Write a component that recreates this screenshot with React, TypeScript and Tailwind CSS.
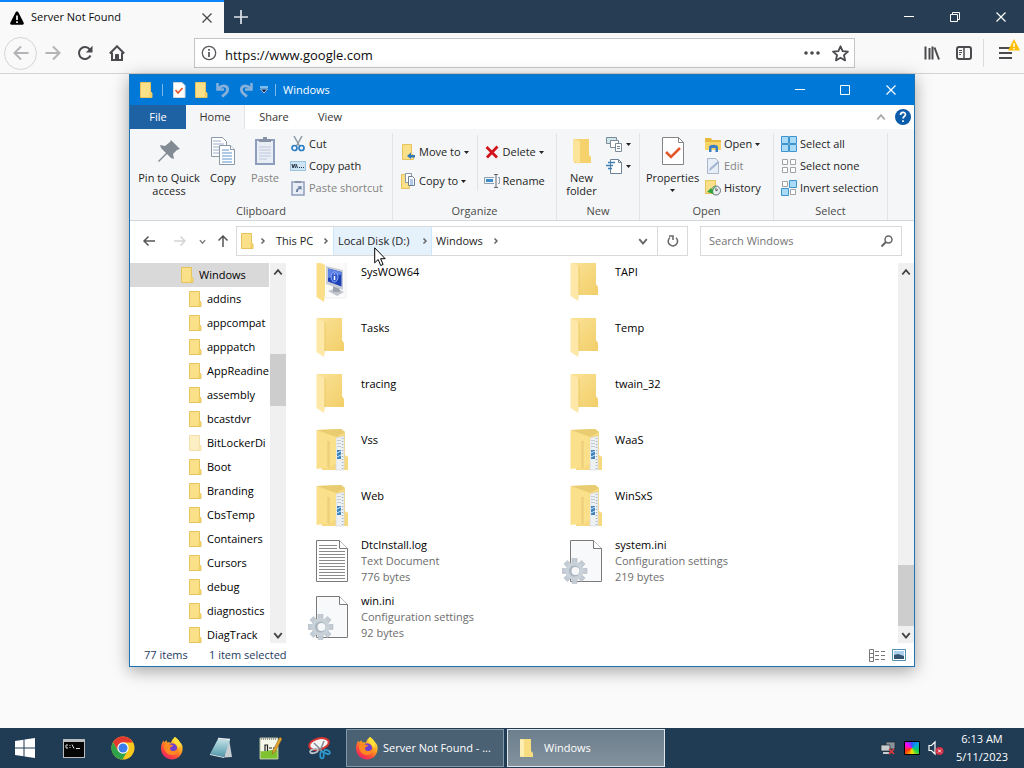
import type { ReactNode } from "react";

const NAV_FOLDERS = [
  "addins",
  "appcompat",
  "apppatch",
  "AppReadine",
  "assembly",
  "bcastdvr",
  "BitLockerDi",
  "Boot",
  "Branding",
  "CbsTemp",
  "Containers",
  "Cursors",
  "debug",
  "diagnostics",
  "DiagTrack",
];

type FileItem = {
  name: string;
  kind: "sys" | "folder" | "full" | "text" | "ini";
  type?: string;
  size?: string;
};

const FILES: FileItem[] = [
  { name: "SysWOW64", kind: "sys" },
  { name: "TAPI", kind: "folder" },
  { name: "Tasks", kind: "folder" },
  { name: "Temp", kind: "folder" },
  { name: "tracing", kind: "folder" },
  { name: "twain_32", kind: "folder" },
  { name: "Vss", kind: "full" },
  { name: "WaaS", kind: "full" },
  { name: "Web", kind: "full" },
  { name: "WinSxS", kind: "full" },
  { name: "DtcInstall.log", kind: "text", type: "Text Document", size: "776 bytes" },
  { name: "system.ini", kind: "ini", type: "Configuration settings", size: "219 bytes" },
  { name: "win.ini", kind: "ini", type: "Configuration settings", size: "92 bytes" },
];

/* ---------- icons ---------- */

function SmallFolder({ faded = false }: { faded?: boolean }) {
  return (
    <svg width="16" height="16" viewBox="0 0 16 16" className={faded ? "shrink-0 opacity-50" : "shrink-0"}>
      <path d="M2.500.500h10v9.500l1.500 1v4.500H2.500z" fill="#fbe08a" stroke="#e6c35c" />
      <path d="M11.500 15V10.500l2-.5v5z" fill="#f3cf63" />
    </svg>
  );
}

function Caret() {
  return (
    <svg width="5" height="3" viewBox="0 0 5 3" className="shrink-0">
      <path d="M0 0h5L2.500 3z" fill="#222" />
    </svg>
  );
}

function Chevron({ dir, color = "#666", size = 8 }: { dir: "up" | "down" | "right"; color?: string; size?: number }) {
  const d = { up: "M1 6l3-3.500L7 6", down: "M1 2.500L4 6l3-3.500", right: "M2.500 1.500L5 4 2.500 6.500" }[dir];
  return (
    <svg width={size} height={size} viewBox="0 0 8 8" className="shrink-0">
      <path d={d} fill="none" stroke={color} strokeWidth="1.500" />
    </svg>
  );
}

function FirefoxLogo() {
  return (
    <svg width="24" height="24" viewBox="0 0 24 24" className="shrink-0">
      <defs>
        <linearGradient id="ffBody" x1=".85" y1=".1" x2=".25" y2="1">
          <stop offset="0" stopColor="#fff04a" />
          <stop offset=".4" stopColor="#ff9a1f" />
          <stop offset=".7" stopColor="#ff4a3a" />
          <stop offset="1" stopColor="#e6206a" />
        </linearGradient>
      </defs>
      <path
        d="M15 1c3 2 4 3.500 4.500 5 .8.4 1.600 1 2 2 .6 1 .8 1.500 1 3C23.500 18 18 23.500 12 23.500S.8 18.500 1 12c0-3 1-5.500 2.500-7.500l.5 2L6.500 4l.5 2.500c1.500-.4 3-.3 4 .3C11.500 4.500 13 2.500 15 1z"
        fill="url(#ffBody)"
      />
      <circle cx="12" cy="12.500" r="5.200" fill="#6f3fd0" />
      <path d="M4 10c1.500-2 4-2.500 6-1.500l3 .8c-.3 1.700-2.500 1.700-3 2.700-.2 2 1.500 3.500 4 3 2-.5 3.500-2 3.500-4.500 2 4-1 8.500-5.500 8.500S4 15.500 4 10z" fill="#ff8a22" />
      <path d="M15 1c-2.500 3-1 6 1.500 7.500 1.500 1.500 1.500 3 1 4.500 3-3 3-6 2-7.500C18.500 4 17 2.500 15 1z" fill="#ffdf3a" />
    </svg>
  );
}

function FolderBig() {
  return (
    <svg width="48" height="48" viewBox="0 0 48 48">
      <defs>
        <linearGradient id="folderBack" x1="0" y1="0" x2="1" y2="1">
          <stop offset="0" stopColor="#fbe298" />
          <stop offset="1" stopColor="#f1ce68" />
        </linearGradient>
      </defs>
      <path d="M9 5h25v22l2 3v8H16z" fill="url(#folderBack)" />
      <path d="M8.500 5L17 9v29l-1 6-7.500-5z" fill="#fde8a8" />
      <path d="M17 9v29" stroke="#edc862" />
    </svg>
  );
}

function FolderFull() {
  return (
    <svg width="48" height="48" viewBox="0 0 48 48">
      <path d="M9 5l24-1 4 3v23l3 2v13H14z" fill="#f6d97e" />
      <path d="M28 13l8-2v34h-8z" fill="#eef1f4" stroke="#d5d9dd" strokeWidth=".7" />
      <path d="M34.500 13v31" stroke="#a9b3bd" strokeWidth="1.500" strokeDasharray="1 2" />
      <path d="M29 15.500h4M29 18.500h4M29 21.500h4" stroke="#c3cbd3" />
      <path d="M29 25h4v9h-4z" fill="#3f83bd" />
      <path d="M29 28l4-2M29 32l4-2" stroke="#cfe8f7" />
      <path d="M9 5l24-1 4 3-9 5z" fill="#e9cb70" />
      <path d="M8.500 5L28 12v26l-8 6-3-1-8.500 1z" fill="#fbe08c" />
      <path d="M20.500 16v27" stroke="#efd07a" strokeWidth="2.500" />
    </svg>
  );
}

function FolderSys() {
  return (
    <svg width="48" height="48" viewBox="0 0 48 48">
      <path d="M9 4h29v37H17z" fill="#fbfbfb" stroke="#efefef" />
      <path d="M8.500 4L17 8v28l-1 9-7.500-5z" fill="#fbdf88" />
      <path d="M9 4h26v1H12z" fill="#f5d672" />
      <path d="M20 34l8-3 8 4-7 4z" fill="#c2c6cc" />
      <path d="M25 28h6l1 7h-7z" fill="#9ba2ab" />
      <path d="M18 9l17 4v20l-17-6z" fill="#c8cdd6" />
      <path d="M20 11.500l13.500 3.500v14.500l-13.500-5z" fill="#1d3fb5" />
      <path d="M20 11.500l13.500 3.500v2.500L20 21z" fill="#5c82e6" />
      <ellipse cx="26.500" cy="20" rx="3.500" ry="5" fill="#3158cf" stroke="#a8c2ff" strokeWidth=".8" />
      <path d="M26.500 19v4M26.500 16.500v1" stroke="#fff" strokeWidth="1.500" />
    </svg>
  );
}

const GEAR_TEETH = [0, 45, 90, 135, 180, 225, 270, 315];

function PageIcon({ gear }: { gear: boolean }) {
  return (
    <svg width="48" height="48" viewBox="0 0 48 48">
      <path d="M8.500 3.500h23l8 8v33h-31z" fill={gear ? "#f8f9fa" : "#fff"} stroke="#7a7a7a" />
      <path d="M31.500 3.500v8h8" fill="#fff" stroke="#7a7a7a" />
      {gear ? (
        <g>
          {GEAR_TEETH.map((a) => (
            <rect key={a} x="10" y="21.500" width="5" height="7" fill="#c3ccd4" stroke="#aab4bd" strokeWidth=".5" transform={`rotate(${a} 12.500 34)`} />
          ))}
          <circle cx="12.500" cy="34" r="9" fill="#cad2d9" />
          <circle cx="12.500" cy="34" r="5.500" fill="#a9b5bf" />
          <circle cx="13.500" cy="34" r="4" fill="#f5f7f8" />
        </g>
      ) : (
        <path
          d="M11 8.500h18M11 11.500h18M11 14.500h26M11 17.500h26M11 20.500h26M11 23.500h26M11 26.500h26M11 29.500h26M11 32.500h26M11 35.500h26M11 38.500h26M11 41.500h26"
          stroke="#8b8b8b"
        />
      )}
    </svg>
  );
}

function FileIcon({ kind }: { kind: FileItem["kind"] }) {
  if (kind === "sys") return <FolderSys />;
  if (kind === "folder") return <FolderBig />;
  if (kind === "full") return <FolderFull />;
  return <PageIcon gear={kind === "ini"} />;
}

function MinimizeIcon() {
  return (
    <svg width="12" height="12" viewBox="0 0 12 12">
      <path d="M1 5.500h10" stroke="#fff" />
    </svg>
  );
}

function CloseIcon({ color = "#fff" }: { color?: string }) {
  return (
    <svg width="12" height="12" viewBox="0 0 12 12">
      <path d="M1.500 1.500l9 9M10.500 1.500l-9 9" stroke={color} strokeWidth="1.200" />
    </svg>
  );
}

/* ---------- browser ---------- */

function Browser() {
  return (
    <header className="shrink-0">
      <div className="flex h-[33px] bg-[#273d53] text-white">
        <div className="flex w-56 items-center gap-[6px] border-t-2 border-[#0a84ff] bg-[#f9f9fa] pr-[9px] pl-[9px] text-[#0c0c0d]">
          <svg width="16" height="16" viewBox="0 0 16 16">
            <path d="M8 1.500c.8 0 1.200.4 1.600 1.200l5 9.800c.6 1.200 0 2.200-1.200 2.200H2.600c-1.200 0-1.800-1-1.200-2.200l5-9.800C6.800 1.900 7.200 1.500 8 1.500z" fill="#000" />
            <path d="M8 5.500v4.500M8 11.300v1.700" stroke="#fff" strokeWidth="1.700" />
          </svg>
          <span className="flex-1 text-[11px]">Server Not Found</span>
          <button type="button" aria-label="Close tab" className="flex size-4 items-center justify-center">
            <CloseIcon color="#444" />
          </button>
        </div>
        <button type="button" aria-label="New tab" className="flex w-[34px] items-center justify-center">
          <svg width="14" height="14" viewBox="0 0 14 14">
            <path d="M7 0v14M0 7h14" stroke="#dfe5eb" strokeWidth="1.700" />
          </svg>
        </button>
        <div className="flex-1" />
        <button type="button" aria-label="Minimize" className="flex w-[46px] items-center justify-center">
          <MinimizeIcon />
        </button>
        <button type="button" aria-label="Restore" className="flex w-[46px] items-center justify-center">
          <svg width="12" height="12" viewBox="0 0 12 12" fill="none" stroke="#fff">
            <path d="M1.500 3.500h7v7h-7zM3.500 3V1.500h7v7H9" />
          </svg>
        </button>
        <button type="button" aria-label="Close" className="flex w-[46px] items-center justify-center">
          <CloseIcon />
        </button>
      </div>

      <div className="flex h-[41px] items-center border-b border-[#d5d5d7] bg-[#f9f9fa] pl-1 text-[#4a4a4f]">
        <button type="button" aria-label="Back" className="flex size-[33px] items-center justify-center rounded-full border border-[#d4d4d6]">
          <svg width="16" height="16" viewBox="0 0 16 16" fill="none" stroke="#b4b4b6" strokeWidth="2">
            <path d="M15.500 8H1.500M8 1.500L1.500 8 8 14.500" />
          </svg>
        </button>
        <button type="button" aria-label="Forward" className="flex size-8 items-center justify-center">
          <svg width="16" height="16" viewBox="0 0 16 16" fill="none" stroke="#b4b4b6" strokeWidth="2">
            <path d="M.5 8h14M8 1.500L14.500 8 8 14.500" />
          </svg>
        </button>
        <button type="button" aria-label="Reload" className="flex size-8 items-center justify-center">
          <svg width="16" height="16" viewBox="0 0 16 16" fill="none" stroke="currentColor" strokeWidth="2">
            <path d="M13.500 10.500a6 6 0 1 1-.8-6.200" />
            <path d="M15.500.800v6.700H8.800z" fill="currentColor" stroke="none" />
          </svg>
        </button>
        <button type="button" aria-label="Home" className="flex size-8 items-center justify-center">
          <svg width="16" height="16" viewBox="0 0 16 16" fill="none" stroke="currentColor" strokeWidth="2">
            <path d="M.8 8.500L8 1.300l7.200 7.200" />
            <path d="M3 7.500V15h10V7.500" />
            <path d="M6.500 14V9.500h3V14z" fill="currentColor" strokeWidth="1" />
          </svg>
        </button>
        <div className="ml-[61px] flex h-[30px] flex-1 items-center border border-[#c5c5c7] bg-white pl-[6px]">
          <svg width="16" height="16" viewBox="0 0 16 16" fill="none" stroke="#5a5a5e">
            <circle cx="8" cy="8" r="6.700" strokeWidth="1.300" />
            <path d="M8 7v5M8 4v1.800" strokeWidth="1.800" />
          </svg>
          <input
            aria-label="Address"
            defaultValue="https://www.google.com"
            className="ml-2 h-full min-w-0 flex-1 pt-[3px] text-[13px] text-[#0c0c0d] outline-none"
          />
          <button type="button" aria-label="Page actions" className="flex w-7 justify-center">
            <svg width="16" height="4" viewBox="0 0 16 4" fill="#4a4a4f">
              <circle cx="2" cy="2" r="1.800" />
              <circle cx="8" cy="2" r="1.800" />
              <circle cx="14" cy="2" r="1.800" />
            </svg>
          </button>
          <button type="button" aria-label="Bookmark" className="flex w-7 justify-center">
            <svg width="17" height="17" viewBox="0 0 16 16" fill="none" stroke="#4a4a4f" strokeWidth="1.700" strokeLinejoin="round">
              <path d="M8 1.200l2 4.600 5 .5-3.700 3.300 1 4.900L8 12l-4.300 2.500 1-4.900L1 6.300l5-.5z" />
            </svg>
          </button>
        </div>
        <div className="ml-[61px] flex h-8 items-center">
          <button type="button" aria-label="Library" className="flex size-8 items-center justify-center">
            <svg width="16" height="16" viewBox="0 0 16 16" fill="none" stroke="currentColor" strokeWidth="2">
              <path d="M1.500 1.500v13M5.500 3v11.500M8.500 1.500v13M10.500 2.500l4.500 12" />
            </svg>
          </button>
          <button type="button" aria-label="Sidebars" className="flex size-8 items-center justify-center">
            <svg width="16" height="16" viewBox="0 0 16 16" fill="none" stroke="currentColor">
              <rect x="1" y="2" width="14" height="12" rx="2" strokeWidth="2" />
              <path d="M8 2v12" strokeWidth="1.500" />
              <path d="M3 5.500h3M3 7.500h3M3 9.500h2" />
            </svg>
          </button>
          <span className="mx-[3px] h-7 w-px bg-[#dcdcde]" />
          <button type="button" aria-label="Menu" className="relative flex h-8 w-[37px] items-center pl-3">
            <svg width="14" height="14" viewBox="0 0 14 14" stroke="currentColor" strokeWidth="2">
              <path d="M0 2h13M0 7h13M0 12h13" />
            </svg>
            <svg width="12" height="12" viewBox="0 0 12 12" className="absolute top-[2px] right-1">
              <path d="M6 0l6 11.500H0z" fill="#ffbf00" />
              <path d="M6 4v4M6 9v1.500" stroke="#fff" strokeWidth="1.400" />
            </svg>
          </button>
        </div>
      </div>
    </header>
  );
}

/* ---------- ribbon ---------- */

function Group({ label, className, children }: { label: string; className: string; children: ReactNode }) {
  return (
    <section aria-label={label} className={`flex shrink-0 flex-col border-r border-[#e2e3e4] pb-px ${className}`}>
      <div className="flex flex-1 items-start">{children}</div>
      <div className="text-center leading-4 text-[#4a4a4a]">{label}</div>
    </section>
  );
}

function BigButton({ icon, className, children }: { icon: ReactNode; className: string; children: ReactNode }) {
  return (
    <button type="button" className={`flex shrink-0 flex-col items-center leading-[13px] ${className}`}>
      <span className="mb-[2px] flex h-9 items-center">{icon}</span>
      {children}
    </button>
  );
}

function SmallButton({ icon, label, caret, disabled }: { icon: ReactNode; label: string; caret?: boolean; disabled?: boolean }) {
  return (
    <button
      type="button"
      disabled={disabled}
      className="flex h-[22px] items-center gap-[3px] whitespace-nowrap disabled:text-[#838383]"
    >
      <span className="flex size-4 shrink-0 items-center justify-center">{icon}</span>
      {label}
      {caret && <Caret />}
    </button>
  );
}

function Ribbon() {
  return (
    <div className="flex h-[92px] overflow-hidden border-b border-[#d4d6d8] bg-[#f5f6f7] pt-1">
      <Group label="Clipboard" className="w-[263px]">
        <BigButton
          className="w-[78px]"
          icon={
            <svg width="24" height="24" viewBox="0 0 24 24">
              <path d="M14 1l9 9-3 1-4 4 1 5-3-1-4-4-8 8-1-1 8-8-5-5-1-3 5 1 5-4z" fill="#828b94" />
            </svg>
          }
        >
          Pin to Quick
          <br />
          access
        </BigButton>
        <BigButton
          className="w-[30px]"
          icon={
            <svg width="28" height="30" viewBox="0 0 28 30" fill="#fff" stroke="#8a97a5">
              <path d="M2.500 1.500h11l4 4v15h-15z" />
              <path d="M4 5h8M4 8h11M4 11h8M4 14h8M4 17h8" stroke="#9ab0c8" />
              <path d="M10.500 9.500h11l4 4v15h-15z" />
              <path d="M21.500 9.500v4h4" />
              <path d="M13 14h7M13 17h10M13 20h10M13 23h10M13 26h10" stroke="#5d94cd" />
            </svg>
          }
        >
          Copy
        </BigButton>
        <BigButton
          className="w-[54px] text-[#838383]"
          icon={
            <svg width="24" height="30" viewBox="0 0 24 30">
              <rect x="3" y="4" width="18" height="24" fill="#e9edf6" stroke="#8e9dbb" strokeWidth="2" />
              <path d="M6 6V3h4V1h4v2h4v3z" fill="#8792a6" />
              <path d="M6 11h12M6 14h12M6 17h12M6 20h12M6 23h8" stroke="#bcc6da" />
            </svg>
          }
        >
          Paste
        </BigButton>
        <div className="-ml-[2px] flex flex-col">
          <SmallButton
            label="Cut"
            icon={
              <svg width="16" height="16" viewBox="0 0 16 16" fill="none">
                <path d="M4 0l5.500 10M12 0L6.500 10" stroke="#8e9aa5" strokeWidth="1.500" />
                <circle cx="4.500" cy="12" r="2.500" stroke="#2b7fc6" strokeWidth="1.700" />
                <circle cx="11.500" cy="12" r="2.500" stroke="#2b7fc6" strokeWidth="1.700" />
              </svg>
            }
          />
          <SmallButton
            label="Copy path"
            icon={
              <svg width="16" height="10" viewBox="0 0 16 10">
                <rect x=".5" y=".5" width="15" height="9" fill="#cde4f5" stroke="#9cc3e0" />
                <path d="M2 3l1 4 1.500-4 1 4M6 3l1.500 4" stroke="#234" fill="none" />
                <path d="M9 6.500h1M11 6.500h1M13 6.500h1" stroke="#234" />
              </svg>
            }
          />
          <SmallButton
            label="Paste shortcut"
            disabled
            icon={
              <svg width="14" height="16" viewBox="0 0 14 16">
                <rect x="1" y="2" width="12" height="13" fill="#e9edf6" stroke="#8e9dbb" strokeWidth="1.500" />
                <path d="M4 3V1h6v2z" fill="#8792a6" />
                <path d="M5 12c0-3 1-4 3-4L6.500 6.500 10.500 6v4L9 9C7.500 9 7 10 7 12z" fill="#6c7f9f" />
              </svg>
            }
          />
        </div>
      </Group>

      <Group label="Organize" className="w-[164px]">
        <div className="mt-2 flex flex-col gap-[7px] pl-[7px]">
          <SmallButton
            label="Move to"
            caret
            icon={
              <svg width="16" height="16" viewBox="0 0 16 16">
                <path d="M2.500.500h9V10l2 1v4.500h-11z" fill="#fbe08a" stroke="#e6c35c" />
                <path d="M7 12l4-3.500V11h4v2.500h-4V15z" fill="#2f78bd" />
              </svg>
            }
          />
          <SmallButton
            label="Copy to"
            caret
            icon={
              <svg width="16" height="16" viewBox="0 0 16 16">
                <path d="M1.500 1.500h8v14h-8z" fill="#fbe08a" stroke="#e6c35c" />
                <path d="M5.500.500h6v9h-6z" fill="#fff" stroke="#8796a6" />
                <path d="M8.500 3.500h4l2 2v7h-6z" fill="#fff" stroke="#6b7f94" />
                <path d="M10 7h3M10 9h3M10 11h3" stroke="#5d94cd" />
              </svg>
            }
          />
        </div>
        <div className="mt-[2px] ml-2 h-14 w-px bg-[#e2e3e4]" />
        <div className="mt-2 flex flex-col gap-[7px] pl-[6px]">
          <SmallButton
            label="Delete"
            caret
            icon={
              <svg width="14" height="14" viewBox="0 0 14 14">
                <path d="M1.500 2L12 12.500M12.500 1.500L2 12.500" stroke="#d2151b" strokeWidth="2.800" />
              </svg>
            }
          />
          <SmallButton
            label="Rename"
            icon={
              <svg width="16" height="16" viewBox="0 0 16 16" fill="none">
                <path d="M10 4.500H.5v6H10M14 4.500h1.500v6H14" stroke="#8fa0b0" />
                <path d="M2 6h7v3H2z" fill="#3e8fd0" />
                <path d="M10 1.500h4M12 1.500v13M10 14.500h4" stroke="#5d6873" />
              </svg>
            }
          />
        </div>
      </Group>

      <Group label="New" className="w-[83px]">
        <BigButton
          className="w-[49px]"
          icon={
            <svg width="22" height="28" viewBox="0 0 22 28">
              <path d="M3 2h15v16l2 2v6H3z" fill="#f5d26c" />
              <path d="M2 2l7 2v21l-1 2-6-3z" fill="#fce49a" />
            </svg>
          }
        >
          New
          <br />
          folder
        </BigButton>
        <div className="flex flex-col">
          <button type="button" aria-label="New item" className="flex h-[22px] items-center gap-[3px]">
            <svg width="17" height="17" viewBox="0 0 17 17" fill="#fff" stroke="#7c8b99">
              <path d="M.5 1.500h10v6H.5z" fill="#cfe6ea" />
              <path d="M4.500 4.500h8v7h-8z" />
              <path d="M9.500 7.500h6v8h-6z" />
              <path d="M11 10.500h3M11 12.500h3" />
            </svg>
            <Caret />
          </button>
          <button type="button" aria-label="Easy access" className="flex h-[22px] items-center gap-[3px]">
            <svg width="17" height="17" viewBox="0 0 17 17" fill="#fff" stroke="#6e8296">
              <path d="M4.500 1.500h8l3 3v11h-11z" />
              <path d="M12.500 1.500v3h3" fill="none" />
              <path d="M2 4.500h7M0 7.500h7M2 10.500h4" stroke="#3b7fb8" strokeWidth="1.500" />
            </svg>
            <Caret />
          </button>
        </div>
      </Group>

      <Group label="Open" className="w-[134px]">
        <BigButton
          className="w-[65px]"
          icon={
            <svg width="22" height="28" viewBox="0 0 22 28">
              <path d="M.5.500h16l5 5v22H.5z" fill="#fff" stroke="#858585" />
              <path d="M16.500.500v5h5" fill="none" stroke="#858585" />
              <path d="M4 15l5 5 9-9" fill="none" stroke="#e2572b" strokeWidth="2.600" />
            </svg>
          }
        >
          Properties
          <span className="flex h-[13px] items-center">
            <Caret />
          </span>
        </BigButton>
        <div className="flex flex-col">
          <SmallButton
            label="Open"
            caret
            icon={
              <svg width="16" height="15" viewBox="0 0 16 15">
                <path d="M0 1h6l1 2h9v10H0z" fill="#e9b93f" />
                <path d="M0 5h16v8H0z" fill="#f8d568" />
                <path d="M4 15V10c0-3 9-3 9 0v5h-2.500v-4h-4v4z" fill="#3c7fc4" />
              </svg>
            }
          />
          <SmallButton
            label="Edit"
            disabled
            icon={
              <svg width="14" height="16" viewBox="0 0 14 16">
                <path d="M1.500.500h8l3 3v12h-11z" fill="#e8eef7" stroke="#a9b7c9" />
                <path d="M3 13l1-3 8-7 1.500 1.500-8 7z" fill="#a3b5d1" />
              </svg>
            }
          />
          <SmallButton
            label="History"
            icon={
              <svg width="16" height="16" viewBox="0 0 16 16">
                <path d="M.5.500h10v13H.5z" fill="#fbe08a" stroke="#e6c35c" />
                <circle cx="11" cy="10.500" r="4.500" fill="#e8ecef" stroke="#6c757d" />
                <path d="M11 8v3l2-1.500" fill="none" stroke="#555" />
                <path d="M2 12l4-4 1 2c2-3 3-4 5-4-3 2-4 4-4 6l1 2z" fill="#33a23c" />
              </svg>
            }
          />
        </div>
      </Group>

      <Group label="Select" className="w-[114px]">
        <div className="flex flex-col pl-[7px]">
          <SmallButton
            label="Select all"
            icon={
              <svg width="16" height="16" viewBox="0 0 16 16" fill="#a9daf6" stroke="#3d94cf">
                <path d="M.5.500h7v7h-7zM8.500.500h7v7h-7zM.5 8.500h7v7h-7zM8.500 8.500h7v7h-7z" />
              </svg>
            }
          />
          <SmallButton
            label="Select none"
            icon={
              <svg width="16" height="16" viewBox="0 0 16 16" fill="#fff" stroke="#a2a2a2">
                <path d="M1.500 1.500h5v5h-5zM9.500 1.500h5v5h-5zM1.500 9.500h5v5h-5zM9.500 9.500h5v5h-5z" />
              </svg>
            }
          />
          <SmallButton
            label="Invert selection"
            icon={
              <svg width="16" height="16" viewBox="0 0 16 16">
                <path d="M1.500 1.500h5v5h-5zM9.500 9.500h5v5h-5z" fill="#fff" stroke="#a2a2a2" />
                <path d="M8.500.500h7v7h-7zM.5 8.500h7v7h-7z" fill="#a9daf6" stroke="#3d94cf" />
              </svg>
            }
          />
        </div>
      </Group>
    </div>
  );
}

/* ---------- explorer ---------- */

function TitleBar() {
  return (
    <div className="flex h-[30px] items-center bg-[#0078d7] text-white">
      <div className="flex flex-1 items-center pl-2">
        <SmallFolder />
        <span className="mx-2 h-3 w-px bg-[#7fb8e8]" />
        <button type="button" aria-label="Properties">
          <svg width="16" height="16" viewBox="0 0 16 16">
            <path d="M2.500.500h8.500l3 3V15.500H2.500z" fill="#fff" stroke="#cfd8e0" />
            <path d="M4.500 8l2.500 3 4.500-5" fill="none" stroke="#e2572b" strokeWidth="1.700" />
          </svg>
        </button>
        <button type="button" aria-label="New folder" className="ml-[6px]">
          <SmallFolder />
        </button>
        <button type="button" aria-label="Undo" className="ml-[6px]">
          <svg width="16" height="16" viewBox="0 0 16 16" fill="none" stroke="#86b0da" strokeWidth="2.800">
            <path d="M3.500 6.500C8 2 13.500 4 12.500 8.500c-.4 2.500-2.500 4-5.500 6" />
            <path d="M2.500 1v6.500H9" strokeWidth="2.500" />
          </svg>
        </button>
        <button type="button" aria-label="Redo" className="ml-[7px]">
          <svg width="16" height="16" viewBox="0 0 16 16" fill="none" stroke="#86b0da" strokeWidth="2.800">
            <path d="M12.500 6.500C8 2 2.500 4 3.500 8.500c.4 2.500 2.500 4 5.500 6" />
            <path d="M13.500 1v6.500H7" strokeWidth="2.500" />
          </svg>
        </button>
        <button type="button" aria-label="Customize Quick Access Toolbar" className="ml-[6px]">
          <svg width="8" height="8" viewBox="0 0 8 8">
            <path d="M0 1h8" stroke="#fff" />
            <path d="M.5 3h7L4 7z" fill="#0b1e4a" stroke="#fff" strokeWidth=".7" />
          </svg>
        </button>
        <span className="mx-[7px] h-3 w-px bg-[#7fb8e8]" />
        <span className="text-[11px]">Windows</span>
      </div>
      <button type="button" aria-label="Minimize" className="flex h-full w-[46px] items-center justify-center">
        <MinimizeIcon />
      </button>
      <button type="button" aria-label="Maximize" className="flex h-full w-[45px] items-center justify-center">
        <svg width="12" height="12" viewBox="0 0 12 12">
          <path d="M.500 1.500h9v9h-9z" fill="none" stroke="#fff" />
        </svg>
      </button>
      <button type="button" aria-label="Close" className="flex h-full w-[46px] items-center justify-center">
        <CloseIcon />
      </button>
    </div>
  );
}

function RibbonTabs() {
  return (
    <nav className="flex h-6 items-stretch bg-white text-[#333]">
      <button type="button" className="w-14 bg-[#1f62a3] text-white">File</button>
      <button type="button" className="w-[59px] border-r border-[#e2e3e4] bg-[#f5f6f7]">Home</button>
      <button type="button" className="w-[58px]">Share</button>
      <button type="button" className="w-[54px]">View</button>
      <div className="flex-1" />
      <button type="button" aria-label="Collapse the ribbon" className="px-[9px]">
        <Chevron dir="up" color="#aaa" size={10} />
      </button>
      <button type="button" aria-label="Help" className="mr-[3px] self-center">
        <svg width="16" height="16" viewBox="0 0 16 16">
          <circle cx="8" cy="8" r="8" fill="#0b5cab" />
          <path d="M5.500 6c0-3.500 5-3.300 5-.4 0 2-2.500 1.800-2.500 4M8 11.200v1.800" fill="none" stroke="#fff" strokeWidth="1.700" />
        </svg>
      </button>
    </nav>
  );
}

function AddressRow() {
  return (
    <div className="flex h-[42px] items-center pr-3 pb-[2px] text-[#222]">
      <button type="button" aria-label="Back" className="flex w-[38px] justify-center">
        <svg width="12" height="12" viewBox="0 0 12 12" fill="none" stroke="#555" strokeWidth="1.500">
          <path d="M12 6H1M5.500 1.500L1 6l4.500 4.500" />
        </svg>
      </button>
      <button type="button" aria-label="Forward" className="flex w-[23px] justify-center">
        <svg width="12" height="12" viewBox="0 0 12 12" fill="none" stroke="#d4d4d4" strokeWidth="1.500">
          <path d="M0 6h11M6.500 1.500L11 6l-4.500 4.500" />
        </svg>
      </button>
      <button type="button" aria-label="Recent locations" className="flex w-[22px] justify-center">
        <Chevron dir="down" color="#777" size={7} />
      </button>
      <button type="button" aria-label="Up" className="flex w-[23px] justify-start pl-1">
        <svg width="12" height="12" viewBox="0 0 12 12" fill="none" stroke="#555" strokeWidth="1.500">
          <path d="M6 12V1M1.500 5.500L6 1l4.500 4.500" />
        </svg>
      </button>
      <div className="flex h-[30px] flex-1 items-stretch border border-[#d9d9d9] bg-white">
        <span className="flex w-[38px] items-center gap-1 pl-[2px]">
          <SmallFolder />
          <Chevron dir="right" />
        </span>
        <button type="button" className="flex w-[58px] items-center justify-between pr-[3px] pl-px whitespace-nowrap">
          This PC
          <Chevron dir="right" />
        </button>
        <button
          type="button"
          className="flex w-[99px] items-center justify-between border-x border-[#cce8ff] bg-[#e5f1fb] pr-[2px] pl-1 whitespace-nowrap"
        >
          Local Disk (D:)
          <Chevron dir="right" />
        </button>
        <button type="button" className="flex w-[70px] items-center justify-between pr-[2px] pl-1 whitespace-nowrap">
          Windows
          <Chevron dir="right" />
        </button>
        <div className="flex-1" />
        <button type="button" aria-label="Previous locations" className="flex w-7 items-center justify-center">
          <Chevron dir="down" size={10} />
        </button>
        <button type="button" aria-label="Refresh" className="flex w-[30px] items-center justify-center border-l border-[#d9d9d9]">
          <svg width="12" height="12" viewBox="0 0 12 12" fill="none" stroke="#666" strokeWidth="1.500">
            <path d="M3 2.500A4.700 4.700 0 1 0 9 2.700" />
            <path d="M2 1h4v4" />
          </svg>
        </button>
      </div>
      <div className="ml-3 flex h-[30px] w-[202px] items-center border border-[#d9d9d9] bg-white px-2">
        <input
          aria-label="Search Windows"
          placeholder="Search Windows"
          className="min-w-0 flex-1 outline-none placeholder:text-[#757575]"
        />
        <svg width="12" height="12" viewBox="0 0 12 12" fill="none" stroke="#666" strokeWidth="1.500">
          <circle cx="7.500" cy="4.500" r="3.500" />
          <path d="M5 7L.5 11.500" strokeWidth="2" />
        </svg>
      </div>
    </div>
  );
}

function ScrollBar({ thumb }: { thumb: string }) {
  return (
    <div className="flex w-4 shrink-0 flex-col items-center bg-[#f0f0f0]">
      <div className="flex h-[17px] items-center">
        <Chevron dir="up" size={10} color="#444" />
      </div>
      <div className="flex w-full flex-1 flex-col">
        <div className={`w-full bg-[#cdcdcd] ${thumb}`} />
      </div>
      <div className="flex h-[17px] items-center">
        <Chevron dir="down" size={10} color="#444" />
      </div>
    </div>
  );
}

function Explorer() {
  return (
    <main className="absolute top-[74px] right-[109px] bottom-[101px] left-[129px] flex flex-col border border-[#1b73b8] bg-white text-[11px] text-[#1e1e1e] shadow-[0_4px_16px_rgba(0,0,0,0.35)]">
      <TitleBar />
      <RibbonTabs />
      <Ribbon />
      <AddressRow />
      <div className="flex min-h-0 flex-1">
        <div className="flex min-h-0 w-[156px] shrink-0">
          <ul className="min-w-0 flex-1 overflow-hidden text-black">
            <li className="mr-px flex h-6 items-center gap-1 bg-[#d9d9d9] pl-[49px]">
              <SmallFolder />
              Windows
            </li>
            {NAV_FOLDERS.map((name) => (
              <li key={name} className="flex h-6 items-center gap-1 overflow-hidden pl-[57px] whitespace-nowrap">
                <SmallFolder faded={name.startsWith("BitLocker")} />
                {name}
              </li>
            ))}
          </ul>
          <ScrollBar thumb="mt-[74px] h-[52px]" />
        </div>
        <div className="min-w-0 flex-1 overflow-hidden">
          {/* scrolled down to the end of the folder */}
          <ul className="-mt-[10px] grid grid-cols-[254px_254px] pl-[22px]">
            {FILES.map((file) => (
              <li key={file.name} className="flex h-14 items-center gap-[5px]">
                <FileIcon kind={file.kind} />
                <div className="min-h-[34px] leading-4 text-[#6d6d6d]">
                  <p className="text-black">{file.name}</p>
                  {file.type && <p>{file.type}</p>}
                  {file.size && <p>{file.size}</p>}
                </div>
              </li>
            ))}
          </ul>
        </div>
        <ScrollBar thumb="mt-auto h-[61px]" />
      </div>
      <footer className="flex h-[23px] shrink-0 items-center pt-px pr-2 pl-[14px] text-[#1e3a5f]">
        <span className="w-[65px]">77 items</span>
        <span className="flex-1">1 item selected</span>
        <button type="button" aria-label="Details view" className="mr-[6px]">
          <svg width="17" height="13" viewBox="0 0 17 13" fill="none" stroke="#777">
            <path d="M.5.500h4v12h-4zM.5 4.500h4M.5 8.500h4" />
            <path d="M6 2.500h11M6 6.500h11M6 10.500h11" strokeDasharray="4 2" />
          </svg>
        </button>
        <button type="button" aria-label="Large icons">
          <svg width="14" height="12" viewBox="0 0 14 12">
            <path d="M.5.500h13v11H.5z" fill="#fff" stroke="#4d91b5" />
            <path d="M2 2h10v8H2z" fill="#a9d0ec" />
            <path d="M2 6l4-1 6 2v3H2z" fill="#35536f" />
          </svg>
        </button>
      </footer>
    </main>
  );
}

/* ---------- taskbar ---------- */

function TaskbarIcon({ label, children }: { label: string; children: ReactNode }) {
  return (
    <button type="button" aria-label={label} className="flex w-[49px] shrink-0 items-center justify-center">
      {children}
    </button>
  );
}

function Taskbar() {
  return (
    <footer className="flex h-10 shrink-0 bg-[#203c54] text-[11px] text-white">
      <TaskbarIcon label="Start">
        <svg width="20" height="20" viewBox="0 0 20 20" fill="#fff">
          <path d="M0 3l8.500-1.200v7.700H0zM9.500 1.600L20 0v9.500H9.500zM0 10.500h8.500v7.700L0 17zM9.500 10.500H20V20L9.500 18.400z" />
        </svg>
      </TaskbarIcon>
      <TaskbarIcon label="Command Prompt">
        <svg width="22" height="19" viewBox="0 0 22 19">
          <path d="M0 0h22v19H0z" fill="#b9bdc0" />
          <path d="M1 3h20v15H1z" fill="#050505" />
          <path d="M5 6H3v3h2M7 6v1M7 8v1M9 5.500l2 4M13 9.500h4" fill="none" stroke="#ddd" />
        </svg>
      </TaskbarIcon>
      <TaskbarIcon label="Google Chrome">
        <svg width="24" height="24" viewBox="0 0 24 24">
          <circle cx="12" cy="12" r="11.500" fill="#f9c81f" />
          <path d="M2 6.200A11.500 11.500 0 0 1 22 6.500H12L7 14.800z" fill="#e5392f" />
          <path d="M2 6.200a11.500 11.500 0 0 0 9.500 17.300l5-8.700L12 17l-5-2.200z" fill="#2fa24c" />
          <circle cx="12" cy="12" r="5.700" fill="#fff" />
          <circle cx="12" cy="12" r="4.500" fill="#3b7ded" />
        </svg>
      </TaskbarIcon>
      <TaskbarIcon label="Firefox">
        <FirefoxLogo />
      </TaskbarIcon>
      <TaskbarIcon label="Notepad">
        <svg width="24" height="24" viewBox="0 0 24 24">
          <defs>
            <linearGradient id="notepad" x1="0" y1="0" x2="0" y2="1">
              <stop offset="0" stopColor="#c3e2e6" />
              <stop offset="1" stopColor="#4f97ab" />
            </linearGradient>
          </defs>
          <path d="M20 3l3 18-8 .500z" fill="#c7cfd2" />
          <path d="M9 3l12 1-6 17-14-3z" fill="url(#notepad)" />
          <path d="M9 2.500l12 1" stroke="#e9f0f1" strokeWidth="1.500" />
          <path d="M1 18l14 3v1L1 19z" fill="#dfe7e9" />
        </svg>
      </TaskbarIcon>
      <TaskbarIcon label="Notepad++">
        <svg width="24" height="24" viewBox="0 0 24 24">
          <path d="M2 2h18v21H2z" fill="#f5f8e8" stroke="#b2bda0" />
          <path d="M2.500 15c6 1 11-2 17-1v8.500h-17z" fill="#7fc22f" />
          <path d="M3 3h16" stroke="#9a9a9a" strokeDasharray="1 1" strokeWidth="2" />
          <path d="M7 15V9h2.500v6M11 12h3M15 12h2" fill="none" stroke="#222" strokeWidth="1.200" />
          <path d="M22 1l2 2-7 13-3 2 1-4z" fill="#e5a52c" stroke="#7f5a1e" strokeWidth=".5" />
        </svg>
      </TaskbarIcon>
      <TaskbarIcon label="Snipping Tool">
        <svg width="24" height="24" viewBox="0 0 24 24" fill="none">
          <ellipse cx="12" cy="8" rx="10" ry="5.500" fill="#f4f4f4" stroke="#d63632" strokeWidth="2" transform="rotate(-15 12 8)" />
          <path d="M7 7l8 8M17 5l-4 10" stroke="#7f8a94" strokeWidth="1.500" />
          <ellipse cx="7" cy="15" rx="4" ry="2" stroke="#b9c2ca" strokeWidth="1.700" transform="rotate(-15 7 15)" />
          <ellipse cx="15" cy="19" rx="1.800" ry="3.500" stroke="#2f9ad0" strokeWidth="1.700" />
          <ellipse cx="20" cy="16" rx="3" ry="1.800" stroke="#2f9ad0" strokeWidth="1.700" transform="rotate(25 20 16)" />
        </svg>
      </TaskbarIcon>
      <button type="button" className="mt-px ml-[3px] flex h-[38px] w-[158px] items-center gap-1 border border-[#8497a6] bg-[#4a6173] pl-2 whitespace-nowrap">
        <FirefoxLogo />
        Server Not Found - ...
      </button>
      <button type="button" className="mt-px ml-[3px] flex h-[38px] w-[158px] items-center gap-[11px] border border-[#dfe5e9] bg-linear-to-b from-[#6c7f8c] to-[#83929d] pl-[11px]">
        <svg width="14" height="20" viewBox="0 0 14 20">
          <path d="M1 1h11v12l2 2v4H1z" fill="#f8dc80" />
          <path d="M1 1l4 1v17l-4-1z" fill="#fdeeb4" />
        </svg>
        Windows
      </button>
      <div className="flex-1" />
      <div className="flex items-center gap-2">
        <svg width="16" height="16" viewBox="0 0 16 16">
          <path d="M6 2h9v7H6z" fill="#8b949b" stroke="#20262b" strokeWidth=".7" />
          <path d="M1 5h9v6H1z" fill="#c7cdd1" stroke="#20262b" strokeWidth=".7" />
          <path d="M3 13h6" stroke="#c7cdd1" strokeWidth="2" />
          <path d="M9 9l5 5M14 9l-5 5" stroke="#e03a3a" strokeWidth="1.700" />
        </svg>
        <span className="flex flex-col items-center bg-black p-px">
          <span className="h-3 w-[14px] bg-[conic-gradient(#2b58ff,#0ad,#17d14a,#ffe600,#ff3c00,#f0f,#2b58ff)]" />
        </span>
        <svg width="16" height="16" viewBox="0 0 16 16" fill="none">
          <path d="M1 5.500h2.500L7 2v12l-3.500-3.500H1z" stroke="#fff" strokeWidth="1.200" />
          <circle cx="11.500" cy="11" r="4" fill="#d32f45" />
          <path d="M10 9.500l3 3M13 9.500l-3 3" stroke="#fff" />
        </svg>
      </div>
      <div className="mr-1 flex w-[76px] flex-col items-center justify-center leading-[18px]">
        <span>6:13 AM</span>
        <span>5/11/2023</span>
      </div>
    </footer>
  );
}

export default function App() {
  return (
    <div className="relative flex h-screen flex-col overflow-hidden bg-[#fafafa] font-['Open_Sans','Noto_Sans',sans-serif]">
      <Browser />
      <div className="flex-1" />
      <Taskbar />
      <Explorer />
      <svg width="13" height="20" viewBox="0 0 13 20" className="absolute top-[247px] left-[374px]">
        <path d="M.7.800v15l3.500-3.300 2.500 6 2.400-1-2.500-5.800h4.600z" fill="#fff" stroke="#000" />
      </svg>
    </div>
  );
}
